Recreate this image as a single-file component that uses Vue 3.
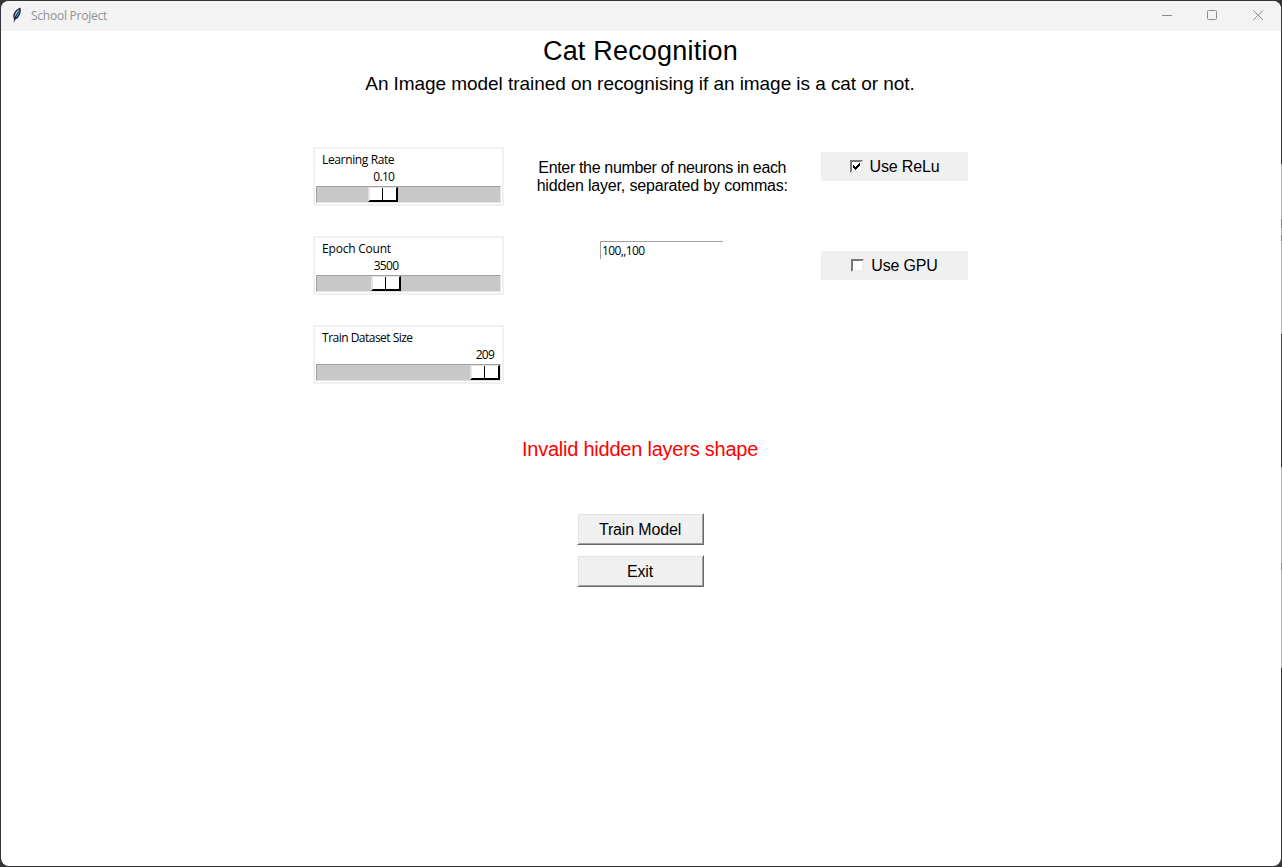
<script setup>
import { ref } from 'vue'

const scales = [
  { label: 'Learning Rate', value: '0.10', offset: 51, kind: 'rate' },
  { label: 'Epoch Count', value: '3500', offset: 54, kind: 'epochs' },
  { label: 'Train Dataset Size', value: '209', offset: 153, kind: 'dataset' },
]
const layers = ref('100,,100')
const options = [
  { label: 'Use ReLu', checked: true },
  { label: 'Use GPU', checked: false },
]
</script>

<template>
  <div class="desktop">
    <div class="window">
      <header class="titlebar">
        <svg class="feather" width="12" height="17" viewBox="0 0 12 17">
          <path d="M9.6 .8C6.4 1.4 2.6 5 2.2 9.2L3 12.2 2.7 15.8 4.4 12.6C7.7 11 9.4 7.5 9.8 4.2Z" fill="#18222e" />
          <path d="M8.6 2C5.4 3.8 3.4 7 3.4 10.4L7.8 3.8Z" fill="#8fc3f5" />
          <path d="M8.8 3 4.4 11.2C7.2 9.6 8.6 6.6 8.8 3Z" fill="#4d8fd8" />
        </svg>
        <span class="caption">School Project</span>
        <div class="controls">
          <svg width="11" height="11" viewBox="0 0 11 11"><path d="M0 5.5H10" /></svg>
          <svg width="11" height="11" viewBox="0 0 11 11"><rect x=".5" y=".5" width="9" height="9" rx="1" /></svg>
          <svg width="11" height="11" viewBox="0 0 11 11"><path d="M.4 .4 10 10M10 .4 .4 10" /></svg>
        </div>
      </header>
      <main>
        <h1>Cat Recognition</h1>
        <p class="subtitle">An Image model trained on recognising if an image is a cat or not.</p>
        <div class="settings">
          <div class="scales">
            <section v-for="s in scales" :key="s.label" class="scale" :class="s.kind">
              <div class="scale-label">{{ s.label }}</div>
              <div class="scale-value" :style="{ width: (s.offset + 30) + 'px' }">{{ s.value }}</div>
              <div class="trough"><div class="thumb" :style="{ marginLeft: s.offset + 'px' }"><i></i></div></div>
            </section>
          </div>
          <div class="layers">
            <p class="hint"><span class="l1">Enter the number of neurons in each</span><br><span class="l2">hidden layer, separated by commas:</span></p>
            <div class="entry">{{ layers }}</div>
          </div>
          <div class="options">
            <div v-for="o in options" :key="o.label" class="option">
              <span class="box">
                <svg v-if="o.checked" width="7" height="7" viewBox="0 0 7 7" shape-rendering="crispEdges"><path d="M0 2h1v1h1v1h1V3h1V2h1V1h1V0h1v3H6v1H5v1H4v1H3v1H2V6H1V5H0z" /></svg>
              </span>
              <span class="option-label">{{ o.label }}</span>
            </div>
          </div>
        </div>
        <p class="error">Invalid hidden layers shape</p>
        <div class="actions">
          <div class="button">Train Model</div>
          <div class="button">Exit</div>
        </div>
      </main>
    </div>
  </div>
</template>

<style>
body { margin: 0; overflow: hidden; }
</style>

<style scoped>
* { box-sizing: border-box; }
.desktop {
  width: 1282px; height: 867px; padding: 1px;
  background:
    linear-gradient(#35343b 164px, #b4b4b4 164px 219px, #858585 219px 228px, #b4b4b4 228px 235px, #858585 235px 241px, #b4b4b4 241px 334px, #45483a 334px 400px, #35363a 400px 467px, #b4b4b4 467px 563px, #8e8e8e 563px 570px, #b4b4b4 570px 668px, #35363a 668px) right / 1px 100% no-repeat,
    #35343b;
}
.window { width: 1280px; height: 865px; background: #fff; border-radius: 8px; overflow: hidden; font-family: "Liberation Sans", Arial, sans-serif; color: #000; }
.titlebar { height: 30px; background: #f3f3f3; display: flex; align-items: flex-start; }
.feather { margin: 6px 0 0 10px; }
.caption { margin: 6px 0 0 8px; font: 12px/17px "Open Sans", sans-serif; color: #919191; letter-spacing: -0.24px; white-space: nowrap; }
.controls { margin: 9px 17px 0 auto; display: flex; gap: 35px; }
.controls svg { fill: none; stroke: #8c8c8c; stroke-width: 1; }
.controls svg:first-child { margin-right: -1px; }
main { width: 1278px; display: flex; flex-direction: column; align-items: center; }
h1 { margin: 5px 0 0; padding-left: 1px; font-size: 27px; line-height: 31px; font-weight: 400; letter-spacing: 0.2px; white-space: nowrap; }
.subtitle { margin: 6px 0 0; font-size: 19px; line-height: 22px; letter-spacing: -0.06px; white-space: nowrap; }
.settings { margin-top: 52px; display: flex; align-items: flex-start; width: 655px; }
.scales { display: flex; flex-direction: column; gap: 30px; }
.scale { width: 191px; height: 59px; border: 2px solid #f0f0f0; padding: 2px 1px 1px; font: 12px/17px "Open Sans", sans-serif; }
.scale-label { padding-left: 6.6px; height: 17px; letter-spacing: -0.38px; white-space: nowrap; }
.epochs .scale-label { letter-spacing: -0.22px; }
.dataset .scale-label { letter-spacing: -0.52px; }
.scale-value { height: 18px; text-align: right; letter-spacing: -0.7px; padding-right: 2.3px; }
.epochs .scale-value { padding-right: 1.2px; }
.dataset .scale-value { padding-right: 4.4px; }
.trough { height: 17px; background: #c8c8c8; border: 1px solid; border-color: #a0a0a0 #e3e3e3 #e3e3e3 #a0a0a0; }
.thumb { width: 30px; height: 15px; background: #fff; border: solid; border-width: 1px 2px 2px; border-color: #e3e3e3 #000 #000 #e3e3e3; }
.thumb i { display: block; width: 1px; height: 12px; margin-left: 12px; background: #000; }
.layers { width: 251px; margin-left: 33px; display: flex; flex-direction: column; align-items: center; }
.hint { margin: 12px 0 0; padding-left: 0.5px; font-size: 16px; line-height: 18px; text-align: center; white-space: nowrap; }
.l1 { letter-spacing: -0.34px; }
.l2 { letter-spacing: -0.17px; }
.entry { width: 123px; height: 18px; margin: 46px 0 0 -2px; border: solid #a0a0a0; border-width: 1px 0 0 1px; padding-left: 1.5px; font: 12px/17px "Open Sans", sans-serif; letter-spacing: -0.6px; }
.options { margin: 5px 0 0 33px; display: flex; flex-direction: column; gap: 70px; }
.option { width: 147px; height: 29px; padding-left: 1px; background: #f0f0f0; display: flex; align-items: center; justify-content: center; font-size: 16px; letter-spacing: -0.15px; white-space: nowrap; }
.box { width: 13px; height: 13px; margin-right: 7px; background: #fff; border: 2px solid; border-color: #777 #eee #eee #777; display: flex; align-items: center; justify-content: center; }
.error { margin: 54px 0 0; font-size: 20px; line-height: 23px; letter-spacing: -0.23px; color: #f00; white-space: nowrap; }
.actions { margin-top: 52px; display: flex; flex-direction: column; gap: 10px; }
.button { width: 127px; height: 32px; background: #f0f0f0; border: 1px solid; border-color: #fff #696969 #696969 #fff; box-shadow: inset 1px 1px #e3e3e3, inset -1px -1px #a0a0a0; padding-top: 1px; font-size: 16px; line-height: 30px; letter-spacing: -0.15px; text-align: center; }
</style>
